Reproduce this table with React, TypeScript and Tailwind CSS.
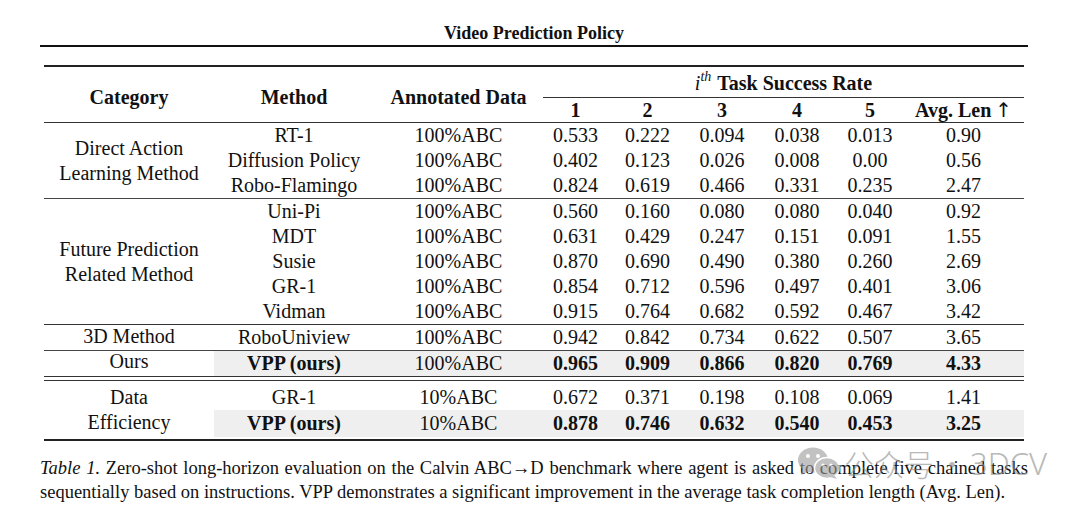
import React from "react";

type Row = { m: string; d: string; v: string[]; bold?: boolean; hl?: boolean };

const COLS = "grid grid-cols-[160px_169px_65px_79px_70px_80px_66px_121px] items-center text-center";

function DataRow({ r, h }: { r: Row; h?: string }) {
  return (
    <div className={`${COLS} ${h ?? "h-[25px]"} ${r.hl ? "bg-[#efefef]" : ""}`}>
      <div className={r.bold ? "font-bold" : ""}>{r.m}</div>
      <div>{r.d}</div>
      {r.v.map((x, i) => (
        <div key={i} className={r.bold ? "font-bold" : ""}>
          {x}
        </div>
      ))}
    </div>
  );
}

function Group({ cat, rows, h, catCls }: { cat: React.ReactNode; rows: Row[]; h?: string; catCls?: string }) {
  return (
    <div className="flex">
      <div
        className={`w-[170px] flex flex-col items-center justify-center text-center ${catCls ?? "leading-[25px]"}`}
      >
        {cat}
      </div>
      <div className="flex flex-col">
        {rows.map((r, i) => (
          <DataRow key={i} r={r} h={h} />
        ))}
      </div>
    </div>
  );
}

const g1: Row[] = [
  { m: "RT-1", d: "100%ABC", v: ["0.533", "0.222", "0.094", "0.038", "0.013", "0.90"] },
  { m: "Diffusion Policy", d: "100%ABC", v: ["0.402", "0.123", "0.026", "0.008", "0.00", "0.56"] },
  { m: "Robo-Flamingo", d: "100%ABC", v: ["0.824", "0.619", "0.466", "0.331", "0.235", "2.47"] },
];
const g2: Row[] = [
  { m: "Uni-Pi", d: "100%ABC", v: ["0.560", "0.160", "0.080", "0.080", "0.040", "0.92"] },
  { m: "MDT", d: "100%ABC", v: ["0.631", "0.429", "0.247", "0.151", "0.091", "1.55"] },
  { m: "Susie", d: "100%ABC", v: ["0.870", "0.690", "0.490", "0.380", "0.260", "2.69"] },
  { m: "GR-1", d: "100%ABC", v: ["0.854", "0.712", "0.596", "0.497", "0.401", "3.06"] },
  { m: "Vidman", d: "100%ABC", v: ["0.915", "0.764", "0.682", "0.592", "0.467", "3.42"] },
];
const g3: Row[] = [{ m: "RoboUniview", d: "100%ABC", v: ["0.942", "0.842", "0.734", "0.622", "0.507", "3.65"] }];
const g4: Row[] = [
  { m: "VPP (ours)", d: "100%ABC", v: ["0.965", "0.909", "0.866", "0.820", "0.769", "4.33"], bold: true, hl: true },
];
const g5a: Row = { m: "GR-1", d: "10%ABC", v: ["0.672", "0.371", "0.198", "0.108", "0.069", "1.41"] };
const g5b: Row = {
  m: "VPP (ours)",
  d: "10%ABC",
  v: ["0.878", "0.746", "0.632", "0.540", "0.453", "3.25"],
  bold: true,
  hl: true,
};

function WeChat() {
  return (
    <svg width="44" height="34" viewBox="0 0 44 34">
      <ellipse cx="16" cy="14" rx="15" ry="12.5" fill="#9a9a9a" />
      <path d="M6 22 L4 29 L12 25 Z" fill="#9a9a9a" />
      <ellipse cx="30" cy="22" rx="12.5" ry="10.5" fill="#9a9a9a" stroke="#fff" strokeWidth="1.5" />
      <path d="M37 29 L40 33 L33 31 Z" fill="#9a9a9a" />
      <circle cx="11" cy="10" r="2" fill="#fff" />
      <circle cx="21" cy="10" r="2" fill="#fff" />
      <circle cx="26" cy="19" r="1.6" fill="#fff" />
      <circle cx="34" cy="19" r="1.6" fill="#fff" />
    </svg>
  );
}

export default function App() {
  return (
    <div className="relative w-[1080px] h-[508px] bg-white text-[#111] font-['Liberation_Serif',serif] overflow-hidden">
      <div className="pl-[40px] w-[1028px]">
        <div className="pt-[22px] h-[44px] text-center text-[18px] leading-[22px] font-bold">Video Prediction Policy</div>
        <div className="mt-[1px] h-[2px] bg-[#111]" />
      </div>

      <div className="ml-[44px] w-[980px] mt-[18px] text-[20px] leading-[25px]">
        <div className="h-[2px] bg-[#222]" />
        {/* header */}
        <div className="flex h-[55px]">
          <div className="w-[170px] pt-[5px] flex items-center justify-center font-bold">Category</div>
          <div className="w-[160px] pt-[5px] flex items-center justify-center font-bold">Method</div>
          <div className="w-[169px] pt-[5px] flex items-center justify-center font-bold">Annotated Data</div>
          <div className="w-[481px] flex flex-col">
            <div className="h-[30px] pt-[3px] flex items-center justify-center">
              <span className="italic">i</span>
              <span className="italic text-[14px] relative top-[-7px] mr-[6px]">th</span>
              <span className="font-bold">Task Success Rate</span>
            </div>
            <div className="h-px bg-[#333]" />
            <div className="grid grid-cols-[65px_79px_70px_80px_66px_121px] h-[24px] items-center text-center font-bold">
              <div>1</div>
              <div>2</div>
              <div>3</div>
              <div>4</div>
              <div>5</div>
              <div className="flex items-center justify-center">
                Avg. Len
                <span className="font-normal font-['DejaVu_Sans',sans-serif] text-[20px] font-extralight ml-[4px]">↑</span>
              </div>
            </div>
          </div>
        </div>
        <div className="h-px bg-[#333]" />
        <Group
          cat={
            <>
              <div>Direct Action</div>
              <div>Learning Method</div>
            </>
          }
          rows={g1}
        />
        <div className="h-px bg-[#444]" />
        <Group
          cat={
            <>
              <div>Future Prediction</div>
              <div>Related Method</div>
            </>
          }
          rows={g2}
        />
        <div className="h-px bg-[#333]" />
        <Group cat={<div>3D Method</div>} rows={g3} h="h-[25px] pb-[3px]" catCls="leading-[21px] pb-[3px]" />
        <div className="h-px bg-[#444]" />
        <Group cat={<div>Ours</div>} rows={g4} h="h-[25px] pb-[4px]" catCls="leading-[21px] pb-[4px]" />
        <div className="h-px bg-[#333]" />
        <div className="h-[3px]" />
        <div className="h-px bg-[#333]" />
        <div className="h-[4px]" />
        <div className="flex">
          <div className="w-[170px] flex flex-col items-center leading-[25px]">
            <div className="h-[25px]">Data</div>
            <div className="h-[27px]">Efficiency</div>
          </div>
          <div className="flex flex-col">
            <DataRow r={g5a} />
            <DataRow r={g5b} h="h-[27px]" />
          </div>
        </div>
        <div className="h-[2px]" />
        <div className="h-[2px] bg-[#222]" />
      </div>

      <div className="ml-[40px] w-[988px] mt-[15px] text-[18.5px] leading-[24px]">
        <div className="text-justify [text-align-last:justify] whitespace-nowrap">
          <span className="italic">Table 1.</span> Zero-shot long-horizon evaluation on the Calvin ABC→D benchmark where
          agent is asked to complete five chained tasks
        </div>
        <div className="whitespace-nowrap">
          sequentially based on instructions. VPP demonstrates a significant improvement in the average task completion
          length (Avg. Len).
        </div>
      </div>

      <div className="absolute left-[797px] top-[446px] flex items-center gap-[3px] opacity-60 text-[#8c8c8c]">
        <WeChat />
        <span className="font-['Noto_Sans_CJK_SC',sans-serif] text-[30px] leading-[34px] font-light">公众号</span>
        <span className="font-['Noto_Sans_CJK_SC',sans-serif] text-[30px] leading-[34px] font-light">·</span>
        <span className="font-['Noto_Sans',sans-serif] text-[31px] leading-[34px] font-light">3DCV</span>
      </div>
    </div>
  );
}
